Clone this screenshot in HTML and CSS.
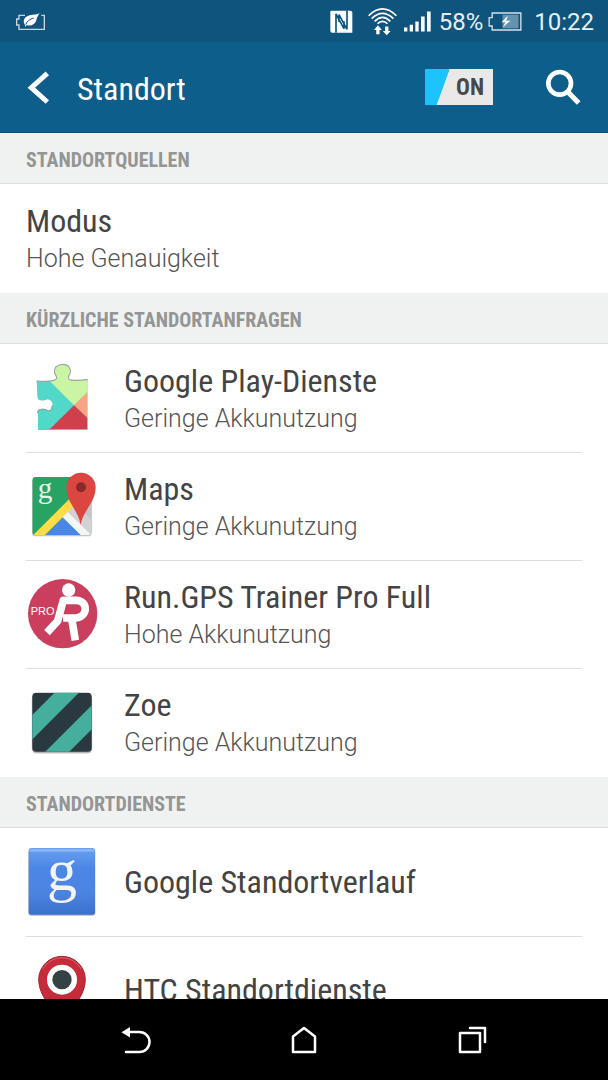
FILE: index.html
```html
<!DOCTYPE html>
<html lang="de">
<head>
<meta charset="utf-8">
<meta name="viewport" content="width=device-width, initial-scale=1">
<title>Standort</title>
<link rel="stylesheet" href="styles.css">
</head>
<body class="screen">
<div class="status-bar">
  <svg class="eco" viewBox="45 30 96 63" aria-hidden="true">
    <path d="M75 43H57V54H50V72H57V85H133V43H124" fill="none" stroke="#c3d7e3" stroke-width="4"/>
    <path d="M119 37C109 43 88 39 77 49C69 57 71 65 74 70L76 78L80 72C92 77 105 71 109 58C111 49 114 43 119 37Z" fill="#fff"/>
    <path d="M77 71C80 61 90 54 101 51" fill="none" stroke="#0e547d" stroke-width="3"/>
  </svg>
  <div class="status-icons">
    <svg class="nfc" viewBox="80 28 69 69" aria-hidden="true">
      <path d="M84 30H141Q147 30 147 36V96H87Q81 96 81 90V33Q81 30 84 30Z" fill="#fff"/>
      <path d="M98 96V40L122 84V62M131 30V86L107 42V64" fill="none" stroke="#0e547d" stroke-width="5"/>
    </svg>
    <svg class="wifi" viewBox="194 19 88 87" aria-hidden="true">
      <g fill="none" stroke="#fff" stroke-width="5">
        <path d="M196 45Q238 4 280 45M205 54Q238 22 271 54M214 62Q238 38 262 62M223 69Q238 55 253 69"/>
      </g>
      <path d="M224 74L236 88H229V101H219V88H212ZM251 104L239 91H246V78H256V91H263Z" fill="#fff"/>
    </svg>
    <svg class="signal" viewBox="303 35 81 62" aria-hidden="true">
      <path d="M303 84H313V96H303ZM320 76H330V96H320ZM337 66H347V96H337ZM354 51H365V96H354ZM372 36H383V96H372Z" fill="#fff"/>
    </svg>
    <span class="percent">58%</span>
    <svg class="battery" viewBox="554 35 101 57" aria-hidden="true">
      <rect x="597" y="43" width="48" height="41" fill="#6493b0"/>
      <path d="M566 38H652V89H566V77H557V52H566Z" fill="none" stroke="#d3e2eb" stroke-width="4"/>
      <path d="M613 46L594 66H606L598 81L621 61H608Z" fill="#fff"/>
    </svg>
    <span class="clock">10:22</span>
  </div>
</div>

<header class="app-bar">
  <button class="icon-button back" type="button" aria-label="Zurück">
    <svg viewBox="84 213 63 99"><path d="M142 220L94 263L142 306" fill="none" stroke="#fff" stroke-width="15"/></svg>
  </button>
  <h1 class="app-title">Standort</h1>
  <label class="switch">
    <input class="switch-input" type="checkbox" role="switch" aria-label="Standort" checked>
    <span class="switch-text">ON</span>
  </label>
  <button class="icon-button search" type="button" aria-label="Suche">
    <svg viewBox="724 208 106 108"><circle cx="767" cy="251" r="34" fill="none" stroke="#fff" stroke-width="14"/><path d="M791 276L824 310" stroke="#fff" stroke-width="15"/></svg>
  </button>
</header>

<main class="content">
  <h2 class="section">STANDORTQUELLEN</h2>
  <ul class="list">
    <li class="item"><a class="row" href="#modus"><span class="labels two-line"><span class="title">Modus</span><span class="sub">Hohe Genauigkeit</span></span></a></li>
  </ul>

  <h2 class="section">KÜRZLICHE STANDORTANFRAGEN</h2>
  <ul class="list">
    <li class="item"><a class="row" href="#play">
      <svg class="app-icon" viewBox="30 21 216 216" aria-hidden="true">
        <defs><clipPath id="puzzle"><path d="M62 79Q92 84 116 77Q128 73 121 60Q113 49 121 37Q129 30 140 30Q153 30 158 38Q166 49 157 61Q152 76 165 77Q190 80 215 75V222H66V175Q66 164 76 164Q88 163 94 168Q110 171 110 151Q110 135 94 133Q86 138 74 136Q64 134 64 122Z"/></clipPath></defs>
        <path d="M62 79Q92 84 116 77Q128 73 121 60Q113 49 121 37Q129 30 140 30Q153 30 158 38Q166 49 157 61Q152 76 165 77Q190 80 215 75" fill="none" stroke="#a2a2a2" stroke-width="7"/>
        <path d="M66 175Q66 164 76 164Q88 163 94 168Q110 171 110 151" fill="none" stroke="#999" stroke-width="6"/>
        <path d="M66 223H215" stroke="#aaa" stroke-width="4"/>
        <g clip-path="url(#puzzle)">
          <path d="M60 20H220V230H60Z" fill="#52d8c8"/>
          <path d="M100 77L110 20H220V107L174 151Z" fill="#c9f5a5"/>
          <path d="M215 110L174 151L215 190Z" fill="#f7a584"/>
          <path d="M102 222L174 151L215 190V222Z" fill="#cf3f4c"/>
        </g>
      </svg>
      <span class="labels two-line"><span class="title">Google Play-Dienste</span><span class="sub">Geringe Akkunutzung</span></span></a></li>
    <li class="item"><a class="row" href="#maps">
      <svg class="app-icon" viewBox="30 21 216 216" aria-hidden="true">
        <defs><clipPath id="map"><rect x="49" y="42" width="177" height="174" rx="10"/></clipPath></defs>
        <rect x="48" y="46" width="179" height="174" rx="11" fill="#c4c4c4"/>
        <g clip-path="url(#map)">
          <path d="M49 42H226V216H49Z" fill="#27a463"/>
          <path d="M226 54L140 144L226 216Z" fill="#c5c5c5"/>
          <path d="M154 150L180 124L226 170V216Z" fill="#d2d2d2"/>
          <path d="M86 219L140 164L196 219Z" fill="#4a86e8"/>
          <path d="M49 219L162 106L184 119L84 219Z" fill="#ffdc48"/>
          <path d="M139 162L155 147L226 216H194Z" fill="#f3f5f6"/>
        </g>
        <text class="g-mark" x="65" y="106" font-size="88" fill="#e4f4ec">g</text>
        <path d="M194 186C188 143 151 119 151 73A44 44 0 0 1 239 73C239 119 200 143 194 186Z" fill="#dc4640"/>
        <circle cx="195" cy="73" r="15" fill="#872a2c"/>
      </svg>
      <span class="labels two-line"><span class="title">Maps</span><span class="sub">Geringe Akkunutzung</span></span></a></li>
    <li class="item"><a class="row" href="#run-gps">
      <svg class="app-icon" viewBox="30 24 216 216" aria-hidden="true">
        <circle cx="140" cy="131" r="104" fill="#ca3f5d"/>
        <circle cx="158" cy="60" r="20" fill="#fff"/>
        <path d="M93 188L125 153L142 91H180C217 92 217 140 180 144H141M167 146L178 211" fill="none" stroke="#fff" stroke-width="23" stroke-linejoin="round"/>
        <text class="pro-mark" x="44" y="134" font-size="33" fill="#fff">PRO</text>
      </svg>
      <span class="labels two-line"><span class="title">Run.GPS Trainer Pro Full</span><span class="sub">Hohe Akkunutzung</span></span></a></li>
    <li class="item"><a class="row" href="#zoe">
      <svg class="app-icon" viewBox="30 18 216 216" aria-hidden="true">
        <defs><clipPath id="tile"><rect x="49" y="38" width="178" height="177" rx="12"/></clipPath></defs>
        <rect x="47" y="43" width="182" height="178" rx="14" fill="#d8d8d8"/>
        <rect x="48" y="41" width="180" height="177" rx="13" fill="#aaa"/>
        <g clip-path="url(#tile)">
          <path d="M48 37H228V216H48Z" fill="#29393f"/>
          <path d="M48 106L117 37H190L48 179ZM87 216L228 75V147L159 216Z" fill="#46ae9d"/>
        </g>
      </svg>
      <span class="labels two-line"><span class="title">Zoe</span><span class="sub">Geringe Akkunutzung</span></span></a></li>
  </ul>

  <h2 class="section">STANDORTDIENSTE</h2>
  <ul class="list">
    <li class="item"><a class="row" href="#verlauf">
      <svg class="app-icon" viewBox="30 33 216 216" aria-hidden="true">
        <defs><linearGradient id="blue" x1="0" y1="0" x2="0" y2="1"><stop offset="0" stop-color="#699ff1"/><stop offset=".3" stop-color="#4d87e6"/><stop offset=".7" stop-color="#4b83e1"/><stop offset="1" stop-color="#3c70cc"/></linearGradient></defs>
        <rect x="37" y="42" width="201" height="200" rx="9" fill="#b3b9c4"/>
        <rect x="38" y="39" width="199" height="200" rx="8" fill="url(#blue)"/>
        <path d="M41 46Q41 42 47 42H228Q234 42 234 46V50H41Z" fill="#88b4f5"/>
        <text class="g-mark" x="93" y="166" font-size="180" fill="#f4f4f4">g</text>
      </svg>
      <span class="labels"><span class="title">Google Standortverlauf</span></span></a></li>
    <li class="item"><a class="row" href="#htc">
      <svg class="app-icon" viewBox="30 27 216 216" aria-hidden="true">
        <path d="M138 240C126 202 68 162 68 104A70 70 0 0 1 208 104C208 162 150 202 138 240Z" fill="#c72b3b" stroke="#9f2935" stroke-width="3"/>
        <path d="M80 72Q102 38 138 38Q174 38 196 72" fill="none" stroke="#e4747d" stroke-width="2"/>
        <circle cx="138" cy="104" r="45" fill="#fff"/>
        <circle cx="138" cy="104" r="29" fill="#354145"/>
      </svg>
      <span class="labels"><span class="title">HTC Standortdienste</span></span></a></li>
  </ul>
</main>

<nav class="nav-bar" aria-label="System">
  <button class="nav-button" type="button" aria-label="Zurück">
    <svg viewBox="0 0 32 32"><path d="M6 9H19.500A9.700 9.700 0 0 1 19.500 29H6" fill="none" stroke="#fff" stroke-width="2.500" stroke-linecap="round"/><path d="M1.500 9.300L10 4V14.500Z" fill="#fff"/></svg>
  </button>
  <button class="nav-button" type="button" aria-label="Startseite">
    <svg viewBox="0 0 32 32"><path d="M5 29V13.500L16 5L27 13.500V29Z" fill="none" stroke="#fff" stroke-width="2.500" stroke-linejoin="round"/></svg>
  </button>
  <button class="nav-button" type="button" aria-label="Letzte Apps">
    <svg viewBox="0 0 32 32"><path d="M4 10H24V29H4ZM14 5H29V19" fill="none" stroke="#fff" stroke-width="2.500" stroke-linecap="round" stroke-linejoin="round"/></svg>
  </button>
</nav>
</body>
</html>
```
FILE: styles.css
```css
* { box-sizing: border-box; }

.screen {
  margin: 0;
  height: 100vh;
  display: flex;
  flex-direction: column;
  overflow: hidden;
  background: #fff;
  color: #444;
  font-family: Roboto, "Liberation Sans", sans-serif;
}

svg { display: block; flex: none; overflow: visible; }
button { border: 0; padding: 0; background: none; cursor: pointer; }

.status-bar {
  flex: none;
  display: flex;
  justify-content: space-between;
  align-items: center;
  height: 42px;
  padding: 0 14px 0 15px;
  background: #0e547d;
  color: #e8f0f5;
  font-size: 24px;
  line-height: 28px;
}
.status-icons { display: flex; align-items: center; }
.eco { width: 32px; height: 21px; }
.nfc { width: 23px; height: 23px; margin-right: 15px; }
.wifi { width: 29px; height: 29px; margin-right: 7px; }
.signal { width: 27px; height: 21px; margin-right: 8px; }
.battery { width: 34px; height: 19px; margin: 0 12px 0 5px; }
.percent, .clock { padding-top: 2px; }

.app-bar {
  flex: none;
  display: flex;
  align-items: center;
  height: 91px;
  padding: 0 27px 0 28px;
  background: #0e5e8b;
  border-bottom: 1px solid #0b4d76;
}
.app-title {
  flex: 1;
  margin: 0 0 0 28px;
  padding-top: 4px;
  color: #fff;
  font: 400 32px/38px "Roboto Condensed", Roboto, sans-serif;
}
.back svg { width: 21px; height: 33px; }
.search svg { width: 36px; height: 36px; }
.switch { position: relative; margin-right: 52px; }
.switch-input {
  appearance: none;
  display: block;
  width: 68px;
  height: 36px;
  margin: 0;
  background: linear-gradient(110deg, #1cc3ff 30%, #e9e9e9 31%);
}
.switch-text {
  position: absolute;
  top: 6px;
  right: 9px;
  color: #484848;
  font: 700 23px/26px "Roboto Condensed", Roboto, sans-serif;
}

.content { flex: 1; min-height: 0; overflow: hidden; }
.section {
  margin: 0;
  padding: 15px 26px 11px;
  background: #f0f2f2;
  border-bottom: 1px solid #dcdddd;
  color: #949595;
  font: 700 20px/24px "Roboto Condensed", Roboto, sans-serif;
}
.list { margin: 0; padding: 0 26px 1px; list-style: none; }
.item + .item { border-top: 1px solid #dedede; }
.row {
  display: flex;
  align-items: center;
  gap: 26px;
  min-height: 108px;
  color: inherit;
  text-decoration: none;
}
.item + .item .row { min-height: 107px; padding-bottom: 1px; }
.app-icon { width: 72px; height: 72px; }
.labels { display: flex; flex-direction: column; }
.two-line { padding-top: 4px; }
.title { font: 400 32px/38px "Roboto Condensed", Roboto, sans-serif; }
.sub { color: #555; font-size: 25px; font-weight: 300; line-height: 38px; }
.g-mark { font-family: "Liberation Serif", serif; }
.pro-mark { font-family: "Liberation Sans", sans-serif; }

.nav-bar {
  flex: none;
  display: flex;
  justify-content: center;
  gap: 136px;
  height: 81px;
  padding-bottom: 2px;
  background: #000;
}
.nav-button svg { width: 32px; height: 32px; }
```
